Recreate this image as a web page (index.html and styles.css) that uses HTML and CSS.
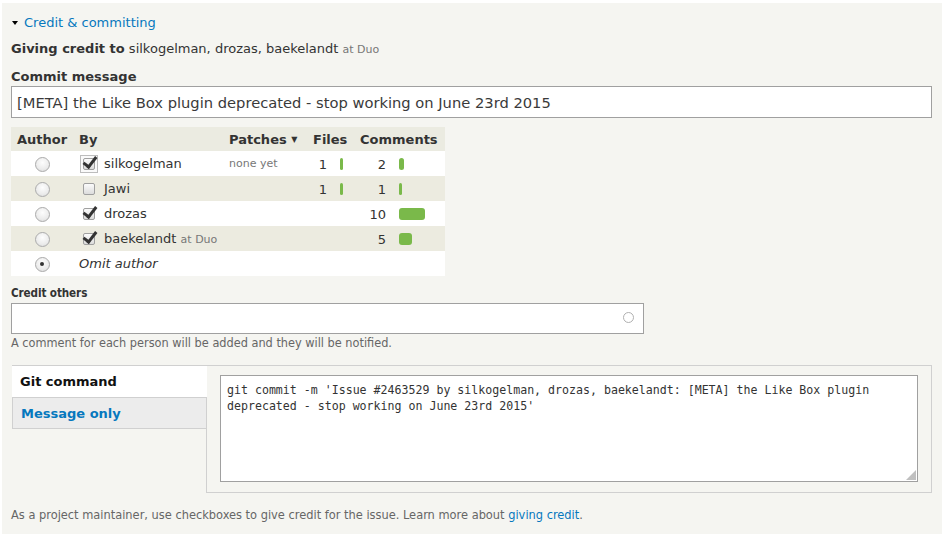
FILE: index.html
```html
<!DOCTYPE html>
<html>
<head>
<meta charset="utf-8">
<link rel="stylesheet" href="styles.css">
</head>
<body>
<div class="panel">
  <div class="summary"><span class="caret"></span><a href="#" class="link">Credit &amp; committing</a></div>
  <div class="giving"><b>Giving credit to</b> silkogelman, drozas, baekelandt <span class="org">at Duo</span></div>
  <label class="label">Commit message</label>
  <input class="msg" type="text" value="[META] the Like Box plugin deprecated - stop working on June 23rd 2015">

  <table class="credits">
    <colgroup><col class="c-author"><col class="c-by"><col class="c-patches"><col class="c-files"><col class="c-comments"></colgroup>
    <thead>
      <tr><th>Author</th><th>By</th><th>Patches <span class="sort">&#9660;</span></th><th>Files</th><th>Comments</th></tr>
    </thead>
    <tbody>
      <tr>
        <td class="author"><span class="radio"></span></td>
        <td><span class="cb focus"><span class="box"></span><span class="tick"></span></span>silkogelman</td>
        <td class="none">none yet</td>
        <td class="stat"><span class="num">1</span><span class="bar" style="width:3px"></span></td>
        <td class="stat"><span class="num wide">2</span><span class="bar" style="width:5px"></span></td>
      </tr>
      <tr class="alt">
        <td class="author"><span class="radio"></span></td>
        <td><span class="cb"><span class="box"></span></span>Jawi</td>
        <td></td>
        <td class="stat"><span class="num">1</span><span class="bar" style="width:3px"></span></td>
        <td class="stat"><span class="num wide">1</span><span class="bar" style="width:3px"></span></td>
      </tr>
      <tr>
        <td class="author"><span class="radio"></span></td>
        <td><span class="cb"><span class="box"></span><span class="tick"></span></span>drozas</td>
        <td></td>
        <td class="stat"></td>
        <td class="stat"><span class="num wide">10</span><span class="bar" style="width:26px"></span></td>
      </tr>
      <tr class="alt">
        <td class="author"><span class="radio"></span></td>
        <td><span class="cb"><span class="box"></span><span class="tick"></span></span>baekelandt <span class="org">at Duo</span></td>
        <td></td>
        <td class="stat"></td>
        <td class="stat"><span class="num wide">5</span><span class="bar" style="width:13px"></span></td>
      </tr>
      <tr>
        <td class="author"><span class="radio on"></span></td>
        <td class="omit">Omit author</td>
        <td></td>
        <td></td>
        <td></td>
      </tr>
    </tbody>
  </table>

  <label class="label small">Credit others</label>
  <div class="others">
    <input class="others-input" type="text">
    <span class="throbber"></span>
  </div>
  <div class="desc">A comment for each person will be added and they will be notified.</div>

  <div class="tabs">
    <div class="tab-list">
      <div class="tab active">Git command</div>
      <div class="tab"><a href="#" class="link">Message only</a></div>
    </div>
    <div class="pane">
      <div class="ta-wrap">
        <textarea class="cmd" readonly>git commit -m 'Issue #2463529 by silkogelman, drozas, baekelandt: [META] the Like Box plugin deprecated - stop working on June 23rd 2015'</textarea>
      </div>
    </div>
  </div>

  <div class="footer">As a project maintainer, use checkboxes to give credit for the issue. Learn more about <a href="#" class="link">giving credit</a>.</div>
</div>
</body>
</html>
```

FILE: styles.css
```css
body {
  margin: 0;
  background: #fff;
  font-family: "DejaVu Sans", sans-serif;
  color: #333;
}

.panel {
  margin: 3px 6px 8px 2px;
  background: #f5f5f1;
  padding: 10px 10px 11px 9px;
}

.link {
  color: #0678be;
  text-decoration: none;
}

.summary {
  display: flex;
  align-items: center;
  height: 18px;
  font-size: 13px;
}

.caret {
  width: 0;
  height: 0;
  border-left: 3px solid transparent;
  border-right: 3px solid transparent;
  border-top: 4px solid #000;
  margin: 1px 6px 0 1px;
}

.giving {
  margin-top: 9px;
  line-height: 18px;
  font-size: 13px;
}

.org {
  font-size: 11px;
  color: #777;
}

.label {
  display: block;
  margin-top: 9px;
  line-height: 18px;
  font-size: 13px;
  font-weight: bold;
}

.msg {
  display: block;
  width: 100%;
  box-sizing: border-box;
  height: 32px;
  margin: 0;
  border: 1px solid #a0a0a0;
  padding: 0 5px;
  font: 14.7px "DejaVu Sans", sans-serif;
  color: #3a3a3a;
  background: #fff;
  outline: none;
}

/* credits table */
.credits {
  margin-top: 9px;
  border-collapse: collapse;
  width: 434px;
  table-layout: fixed;
  font-size: 13px;
}

.c-author { width: 62px; }
.c-by { width: 150px; }
.c-patches { width: 84px; }
.c-files { width: 47px; }
.c-comments { width: 91px; }

.credits th {
  background: #ebebe1;
  height: 24px;
  padding: 0 6px;
  text-align: left;
  font-weight: bold;
  white-space: nowrap;
}

.sort {
  font-size: 8px;
  vertical-align: 2px;
}

.credits td {
  height: 25px;
  padding: 0 6px;
  background: #fff;
  white-space: nowrap;
  vertical-align: middle;
}

.credits tr.alt td {
  background: #ecebe0;
}

.credits td.author {
  text-align: center;
  padding: 0;
}

.radio {
  display: inline-block;
  width: 13px;
  height: 13px;
  border: 1px solid #ababab;
  border-radius: 50%;
  background: radial-gradient(circle at 50% 35%, #fdfdfd 0%, #ececec 60%, #d8d8d8 100%);
  vertical-align: middle;
  position: relative;
}

.radio.on::after {
  content: "";
  position: absolute;
  left: 4.5px;
  top: 4.5px;
  width: 4px;
  height: 4px;
  border-radius: 50%;
  background: #333;
}

.cb {
  display: inline-block;
  position: relative;
  width: 18px;
  height: 18px;
  margin: 0 6px 0 1px;
  vertical-align: middle;
  box-sizing: border-box;
}

.cb.focus {
  border: 1px solid #bdbdbd;
  background: #fafafa;
}

.cb .box {
  position: absolute;
  left: 3px;
  top: 3px;
  width: 10px;
  height: 10px;
  border: 1px solid #a0a0a0;
  border-radius: 2px;
  background: linear-gradient(#fbfbfb, #dcdcdc);
}

.cb.focus .box {
  left: 2px;
  top: 2px;
}

.cb .tick {
  position: absolute;
  left: 6px;
  top: -1px;
  width: 5px;
  height: 11px;
  border-right: 3px solid #333;
  border-bottom: 3px solid #333;
  transform: rotate(38deg);
  transform-origin: center;
}

.cb.focus .tick {
  left: 5px;
  top: -2px;
}

.none {
  font-size: 11px;
  color: #777;
}

.credits td.stat {
  padding: 0;
}

.num {
  display: inline-block;
  width: 20px;
  text-align: right;
  vertical-align: middle;
}

.num.wide {
  width: 32px;
}

.bar {
  display: inline-block;
  height: 12px;
  margin-left: 13px;
  border-radius: 3px;
  background: #7ab94a;
  vertical-align: middle;
}

.omit {
  font-style: italic;
}

/* credit others */
.label.small {
  margin-top: 8px;
  font-size: 11.6px;
  letter-spacing: -0.1px;
  font-family: "DejaVu Sans Condensed", "DejaVu Sans", sans-serif;
  font-stretch: condensed;
}

.others {
  position: relative;
  width: 633px;
  margin-top: 1px;
}

.others-input {
  display: block;
  width: 100%;
  box-sizing: border-box;
  height: 31px;
  margin: 0;
  border: 1px solid #a0a0a0;
  background: #fff;
  outline: none;
}

.throbber {
  position: absolute;
  right: 10px;
  top: 9px;
  width: 9px;
  height: 9px;
  border: 1.5px solid #b0b0b0;
  border-radius: 50%;
}

.desc {
  margin-top: 2px;
  line-height: 14px;
  font-size: 12.6px;
  color: #666;
  font-family: "DejaVu Sans Condensed", "DejaVu Sans", sans-serif;
  font-stretch: condensed;
}

/* tabs */
.tabs {
  display: flex;
  margin: 15px 0 0 1px;
  width: 920px;
}

.tab-list {
  width: 194px;
  flex: none;
}

.tab {
  height: 32px;
  box-sizing: border-box;
  padding-left: 8px;
  line-height: 31px;
  font-size: 13px;
  font-weight: bold;
  background: #ececec;
  border: 1px solid #d0d0d0;
  border-right: none;
}

.tab.active {
  position: relative;
  z-index: 1;
  width: 195px;
  background: #fff;
  color: #111;
  border: none;
  border-top: 1px solid #d0d0d0;
}

.pane {
  flex: 1;
  border: 1px solid #d0d0d0;
  padding: 9px 13px 10px;
  position: relative;
}

.ta-wrap {
  position: relative;
  height: 107px;
}

.cmd {
  display: block;
  width: 100%;
  height: 107px;
  box-sizing: border-box;
  margin: 0;
  padding: 6px 6px 5px;
  border: 1px solid #a0a0a0;
  background: #fff;
  resize: none;
  outline: none;
  font-family: "DejaVu Sans Mono", monospace;
  font-size: 11.6px;
  line-height: 16px;
  color: #333;
  overflow: hidden;
}

.ta-wrap::after {
  content: "";
  position: absolute;
  right: 2px;
  bottom: 2px;
  width: 10px;
  height: 10px;
  background: radial-gradient(circle, #bbb 0.7px, transparent 0.8px) 0 0 / 2px 2px;
  clip-path: polygon(100% 0, 100% 100%, 0 100%);
}

.footer {
  margin-top: 14px;
  line-height: 16px;
  font-size: 12.7px;
  color: #666;
  font-family: "DejaVu Sans Condensed", "DejaVu Sans", sans-serif;
  font-stretch: condensed;
}
```
